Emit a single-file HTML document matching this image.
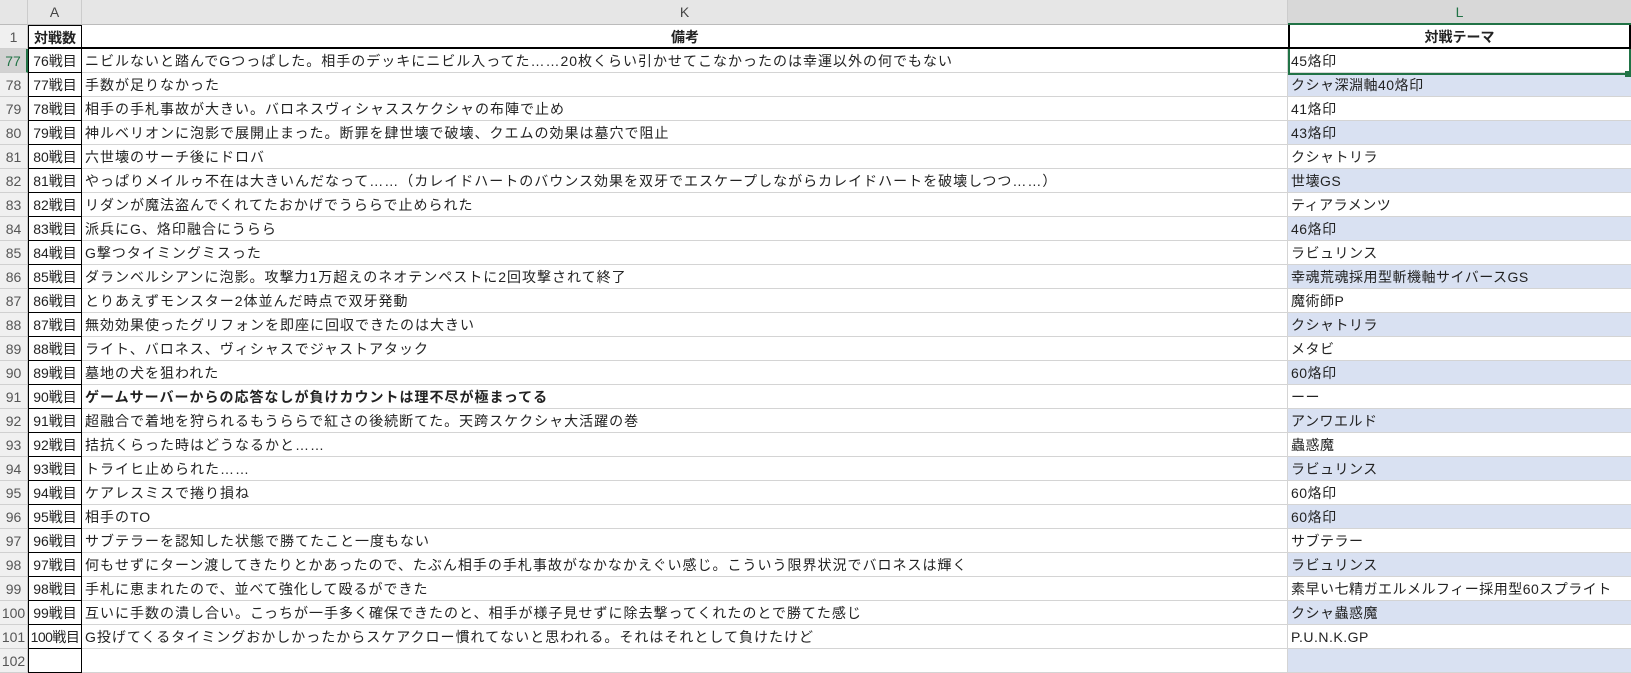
<!DOCTYPE html>
<html><head><meta charset="utf-8"><style>
*{margin:0;padding:0;box-sizing:border-box}
body{width:1631px;height:652px;overflow:hidden;background:#fff;font-family:"Liberation Sans","Noto Sans CJK JP",sans-serif;font-size:14px;color:#222;position:relative}
.c{position:absolute;white-space:nowrap;overflow:hidden;line-height:24px}
.hd{position:absolute;background:#e6e6e6;color:#444;text-align:center;line-height:25px;font-size:14px}
.rn{position:absolute;left:0;width:28px;background:#f0f0f0;color:#555;text-align:center;font-size:14px;border-bottom:1px solid #d0d0d0;border-right:1px solid #c8c8c8}
.a{position:absolute;left:28px;width:54px;text-align:center;border:1px solid #000;border-top:none;letter-spacing:0}
.k{position:absolute;left:82px;width:1206px;padding-left:3px;border-bottom:1px solid #d4d4d4;border-right:1px solid #d4d4d4;letter-spacing:1px}
.l{position:absolute;left:1288px;width:343px;padding-left:3px;border-bottom:1px solid #d4d4d4;letter-spacing:.5px}
.s{background:#d9e1f2}
</style></head><body>
<div class="hd" style="left:0;top:0;width:28px;height:25px;border-right:1px solid #ccc;border-bottom:1px solid #bbb"></div>
<div class="hd" style="left:28px;top:0;width:54px;height:25px;border-right:1px solid #ccc;border-bottom:1px solid #bbb">A</div>
<div class="hd" style="left:82px;top:0;width:1206px;height:25px;border-right:1px solid #ccc;border-bottom:1px solid #bbb">K</div>
<div class="hd" style="left:1288px;top:0;width:343px;height:25px;background:#d8d8d8;color:#217346;border-bottom:2px solid #217346">L</div>
<div class="rn c" style="top:25px;height:24px;line-height:24px">1</div>
<div class="a c" style="top:25px;height:24px;font-weight:bold;border-top:1px solid #000;border-bottom:2px solid #000">対戦数</div>
<div class="c" style="left:82px;top:25px;width:1206px;height:24px;text-align:center;font-weight:bold;border-bottom:2px solid #000">備考</div>
<div class="c" style="left:1288px;top:25px;width:343px;height:24px;text-align:center;font-weight:bold;border:2px solid #000;border-top:none">対戦テーマ</div>
<div id="rows"></div>
<script>
var d=[
["76戦目","ニビルないと踏んでGつっぱした。相手のデッキにニビル入ってた……20枚くらい引かせてこなかったのは幸運以外の何でもない","45烙印"],
["77戦目","手数が足りなかった","クシャ深淵軸40烙印"],
["78戦目","相手の手札事故が大きい。バロネスヴィシャススケクシャの布陣で止め","41烙印"],
["79戦目","神ルベリオンに泡影で展開止まった。断罪を肆世壊で破壊、クエムの効果は墓穴で阻止","43烙印"],
["80戦目","六世壊のサーチ後にドロバ","クシャトリラ"],
["81戦目","やっぱりメイルゥ不在は大きいんだなって……（カレイドハートのバウンス効果を双牙でエスケープしながらカレイドハートを破壊しつつ……）","世壊GS"],
["82戦目","リダンが魔法盗んでくれてたおかげでうららで止められた","ティアラメンツ"],
["83戦目","派兵にG、烙印融合にうらら","46烙印"],
["84戦目","G撃つタイミングミスった","ラビュリンス"],
["85戦目","ダランベルシアンに泡影。攻撃力1万超えのネオテンペストに2回攻撃されて終了","幸魂荒魂採用型斬機軸サイバースGS"],
["86戦目","とりあえずモンスター2体並んだ時点で双牙発動","魔術師P"],
["87戦目","無効効果使ったグリフォンを即座に回収できたのは大きい","クシャトリラ"],
["88戦目","ライト、バロネス、ヴィシャスでジャストアタック","メタビ"],
["89戦目","墓地の犬を狙われた","60烙印"],
["90戦目","<b>ゲームサーバーからの応答なしが負けカウントは理不尽が極まってる</b>","ーー"],
["91戦目","超融合で着地を狩られるもうららで紅さの後続断てた。天跨スケクシャ大活躍の巻","アンワエルド"],
["92戦目","拮抗くらった時はどうなるかと……","蟲惑魔"],
["93戦目","トライヒ止められた……","ラビュリンス"],
["94戦目","ケアレスミスで捲り損ね","60烙印"],
["95戦目","相手のTO","60烙印"],
["96戦目","サブテラーを認知した状態で勝てたこと一度もない","サブテラー"],
["97戦目","何もせずにターン渡してきたりとかあったので、たぶん相手の手札事故がなかなかえぐい感じ。こういう限界状況でバロネスは輝く","ラビュリンス"],
["98戦目","手札に恵まれたので、並べて強化して殴るができた","素早い七精ガエルメルフィー採用型60スプライト"],
["99戦目","互いに手数の潰し合い。こっちが一手多く確保できたのと、相手が様子見せずに除去撃ってくれたのとで勝てた感じ","クシャ蟲惑魔"],
["100戦目","G投げてくるタイミングおかしかったからスケアクロー慣れてないと思われる。それはそれとして負けたけど","P.U.N.K.GP"],
["","",""]];
var h="";
for(var i=0;i<d.length;i++){
 var r=77+i,t=49+i*24,sh=(r%2==0)?" s":"";
 var rn=(i==0)?'background:#d2d2d2;color:#217346;border-right:2px solid #217346;':'';
 h+='<div class="rn c" style="top:'+t+'px;height:24px;'+rn+'">'+r+'</div>';
 h+='<div class="a c" style="top:'+t+'px;height:24px;'+(r==101?'letter-spacing:-0.5px':'')+'">'+d[i][0]+'</div>';
 h+='<div class="k c" style="top:'+t+'px;height:24px">'+d[i][1]+'</div>';
 h+='<div class="l c'+sh+'" style="top:'+t+'px;height:24px">'+d[i][2]+'</div>';
}
h+='<div style="position:absolute;left:1288px;top:49px;width:343px;height:26px;border:2px solid #217346;border-top:none"></div>';
h+='<div style="position:absolute;left:1625px;top:71px;width:6px;height:6px;background:#217346"></div>';
document.getElementById("rows").innerHTML=h;
</script>
</body></html>
